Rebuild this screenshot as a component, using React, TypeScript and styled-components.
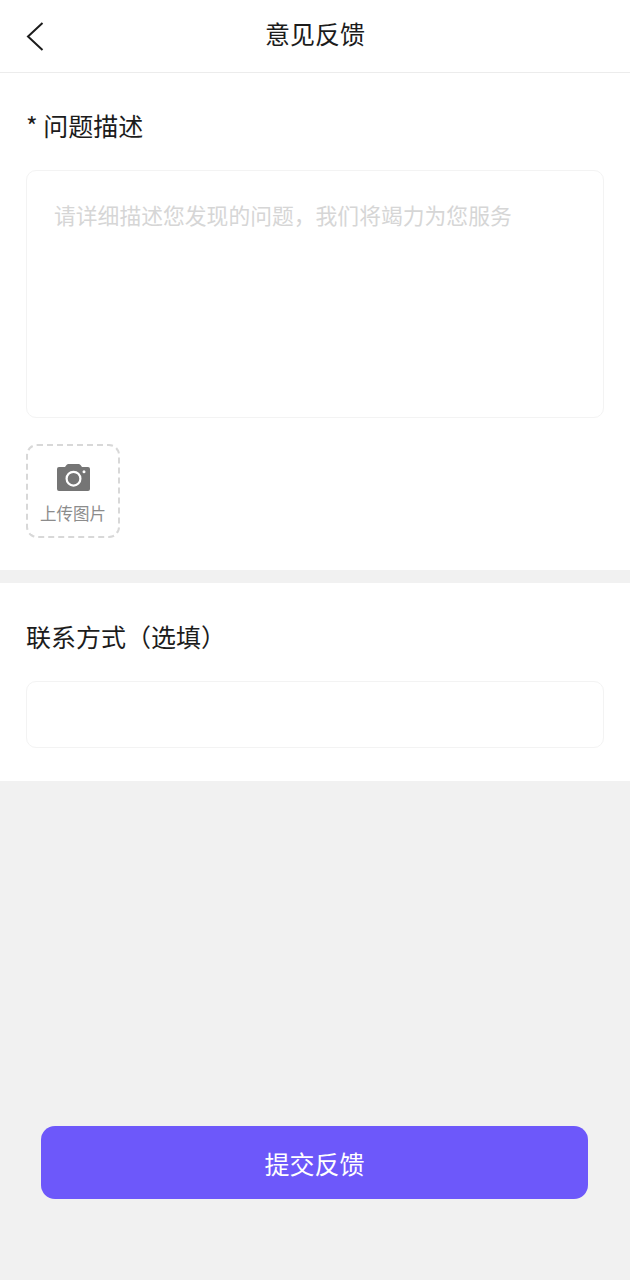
import React from "react";
import styled, { createGlobalStyle } from "styled-components";

const GlobalStyle = createGlobalStyle`
  html, body {
    margin: 0;
    padding: 0;
    background: #f1f1f1;
  }
  * {
    box-sizing: border-box;
  }
`;

const Page = styled.div`
  display: flex;
  flex-direction: column;
  width: 630px;
  height: 1280px;
  background: #f1f1f1;
  font-family: "Noto Sans CJK SC", "Noto Sans", sans-serif;
  color: #1c1c1c;
`;

const Header = styled.header`
  position: relative;
  display: flex;
  align-items: center;
  justify-content: center;
  height: 73px;
  background: #fff;
  border-bottom: 1px solid #ececec;
`;

const BackButton = styled.button`
  position: absolute;
  left: 26px;
  top: 21px;
  display: flex;
  width: 18px;
  height: 30px;
  padding: 0;
  border: 0;
  background: none;
`;

const Title = styled.h1`
  margin: 0 0 7px;
  font-size: 25px;
  line-height: 34px;
  font-weight: 400;
`;

const Section = styled.section<{ $top: number; $bottom: number }>`
  display: flex;
  flex-direction: column;
  align-items: flex-start;
  padding: ${(p) => p.$top}px 26px ${(p) => p.$bottom}px;
  background: #fff;
`;

const Label = styled.div`
  font-size: 25px;
  line-height: 34px;
`;

const TextBox = styled.div<{ $height: number; $top: number }>`
  width: 578px;
  height: ${(p) => p.$height}px;
  margin-top: ${(p) => p.$top}px;
  padding: 26px 27px 0;
  border: 1px solid #f3f3f3;
  border-radius: 10px;
  background: #fff;
  font-size: 21.8px;
  line-height: 36px;
  color: #d6d6d6;
`;

const Upload = styled.div`
  display: flex;
  flex-direction: column;
  align-items: center;
  width: 94px;
  height: 94px;
  margin-top: 26px;
  padding-top: 18px;
  border: 2px dashed #d8d8d8;
  border-radius: 11px;
`;

const UploadText = styled.span`
  margin-top: 10px;
  font-size: 16.5px;
  line-height: 24px;
  color: #8c8c8c;
`;

const Divider = styled.div`
  height: 13px;
`;

const Footer = styled.div`
  display: flex;
  justify-content: center;
  margin-top: auto;
  padding: 0 42px 81px 41px;
`;

const SubmitButton = styled.button`
  width: 547px;
  height: 73px;
  border: 0;
  border-radius: 14px;
  background: #6d58fa;
  color: #fff;
  font-family: inherit;
  font-size: 25px;
`;

const App = () => (
  <Page>
    <GlobalStyle />
    <Header>
      <BackButton aria-label="返回">
        <svg width="18" height="30" viewBox="0 0 18 30" fill="none">
          <path d="M16.5 2L2 15.500l14.500 13.500" stroke="#1c1c1c" strokeWidth="2" />
        </svg>
      </BackButton>
      <Title>意见反馈</Title>
    </Header>
    <Section $top={35} $bottom={32}>
      <Label>* 问题描述</Label>
      <TextBox $height={248} $top={28}>
        请详细描述您发现的问题，我们将竭力为您服务
      </TextBox>
      <Upload>
        <svg width="33" height="27" viewBox="0 0 33 27">
          <path
            fill="#757575"
            fillRule="evenodd"
            d="M2 3h6L9.500 1Q10.300 0 11.500 0h10q1.200 0 2 1L25 3h6a2 2 0 0 1 2 2v20a2 2 0 0 1-2 2H2a2 2 0 0 1-2-2V5a2 2 0 0 1 2-2zm14.500 3.700a8 8 0 1 0 0 16 8 8 0 0 0 0-16zm0 2.200a5.800 5.800 0 1 1 0 11.600 5.800 5.800 0 0 1 0-11.600zM27 6.200a1.500 1.500 0 1 0 0 3 1.500 1.500 0 0 0 0-3z"
          />
        </svg>
        <UploadText>上传图片</UploadText>
      </Upload>
    </Section>
    <Divider />
    <Section $top={36} $bottom={33}>
      <Label>联系方式（选填）</Label>
      <TextBox $height={67} $top={28} />
    </Section>
    <Footer>
      <SubmitButton>提交反馈</SubmitButton>
    </Footer>
  </Page>
);

export default App;
